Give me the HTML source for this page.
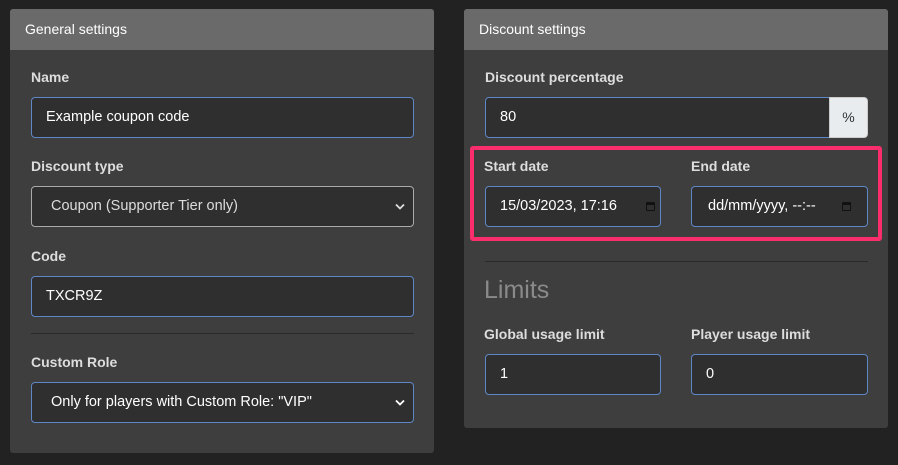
<!DOCTYPE html>
<html><head><style>
*{box-sizing:border-box;margin:0;padding:0}
body{width:898px;height:465px;background:#222;font-family:"Liberation Sans",sans-serif;position:relative;overflow:hidden}
.p{position:absolute;background:#3e3e3e;border-radius:3px;overflow:hidden}
.h{height:41px;background:#6a6a6a;color:#fff;font-size:14px;padding:12px 15px}
.a{position:absolute}
.l{position:absolute;color:#ddd;font-size:14px;font-weight:bold}
.i{position:absolute;background:#2f2f2f;border:1px solid #5f86c6;border-radius:4px;color:#fff;font-size:14.5px;padding:11px 14px;height:41px}
.s{border-color:#aaa;color:#ddd;padding-left:19px}
.hr{position:absolute;height:1px;background:#2a2a2a}
.cal{position:absolute;right:16px;top:15px;width:9px;height:9px;border:1.5px solid #111;border-top-width:3px;border-radius:1px}
.chev{position:absolute;right:8px;top:16px}
</style></head><body>
<div class="p" style="left:10px;top:9px;width:424px;height:444px"><div class="h">General settings</div></div>
<div class="p" style="left:464px;top:9px;width:424px;height:419px"><div class="h">Discount settings</div></div>

<div class="l" style="left:31px;top:69px">Name</div>
<div class="i" style="left:31px;top:97px;width:383px">Example coupon code</div>
<div class="l" style="left:31px;top:158px">Discount type</div>
<div class="i s" style="left:31px;top:186px;width:383px">Coupon (Supporter Tier only)<svg class="chev" width="10" height="7" viewBox="0 0 10 7"><path d="M1 1.5L5 5.5L9 1.5" stroke="#ddd" stroke-width="1.8" fill="none"/></svg></div>
<div class="l" style="left:31px;top:248px">Code</div>
<div class="i" style="left:31px;top:276px;width:383px">TXCR9Z</div>
<div class="hr" style="left:31px;top:333px;width:383px"></div>
<div class="l" style="left:31px;top:354px">Custom Role</div>
<div class="i" style="left:31px;top:382px;width:383px;padding-left:19px">Only for players with Custom Role: "VIP"<svg class="chev" width="10" height="7" viewBox="0 0 10 7"><path d="M1 1.5L5 5.5L9 1.5" stroke="#fff" stroke-width="1.8" fill="none"/></svg></div>

<div class="l" style="left:485px;top:69px">Discount percentage</div>
<div class="i" style="left:485px;top:97px;width:345px;border-radius:4px 0 0 4px">80</div>
<div class="a" style="left:829px;top:97px;width:39px;height:41px;background:#e9ecef;border:1px solid #ccc;border-radius:0 4px 4px 0;color:#333;font-size:14px;text-align:center;line-height:39px">%</div>
<div class="a" style="left:470px;top:146px;width:412px;height:95px;border:4px solid #fa2e6c;border-radius:3px"></div>
<div class="l" style="left:484px;top:158px">Start date</div>
<div class="i" style="left:485px;top:186px;width:176px;padding-left:14px">15/03/2023, 17:16<span class="cal" style="right:5px"></span></div>
<div class="l" style="left:691px;top:158px">End date</div>
<div class="i" style="left:691px;top:186px;width:177px;padding-left:16px">dd/mm/yyyy, --:--<span class="cal"></span></div>
<div class="hr" style="left:485px;top:261px;width:383px"></div>
<div class="a" style="left:484px;top:276px;color:#8a8a8a;font-size:25px">Limits</div>
<div class="l" style="left:484px;top:326px">Global usage limit</div>
<div class="i" style="left:485px;top:354px;width:176px">1</div>
<div class="l" style="left:691px;top:326px">Player usage limit</div>
<div class="i" style="left:691px;top:354px;width:177px">0</div>
</body></html>
